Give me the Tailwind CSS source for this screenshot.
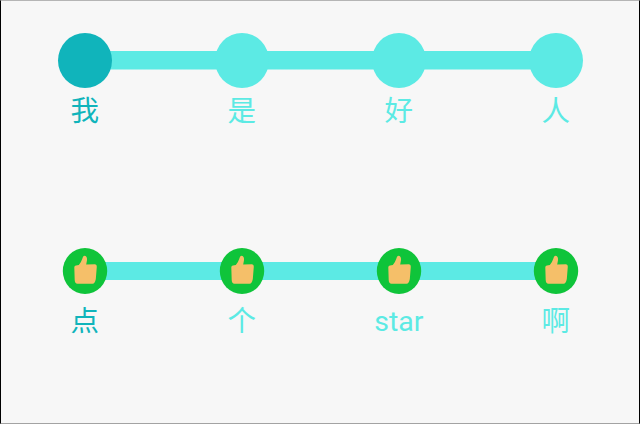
<!DOCTYPE html>
<html lang="zh-CN">
<head>
<meta charset="utf-8">
<title>Step view</title>
<script src="https://cdn.jsdelivr.net/npm/@tailwindcss/browser@4"></script>
</head>
<body class="bg-[#f7f7f7]">
<svg class="hidden">
  <symbol id="thumb" viewBox="0 0 46 46">
    <ellipse cx="23" cy="23" rx="22.2" ry="23" fill="#0fc43a"/>
    <path d="M12.3 19.2 Q12.4 17.8 14 17.6 L16.8 17 Q19.2 14.5 20.3 10.8 Q20.8 7.6 22.8 7.8 Q25.4 8.4 25 12.2 L24.2 16.4 L33 16.3 Q35 16.5 34.8 18.7 L33.8 31 Q33 35.6 30.5 35.8 L15.5 35.8 Q12.8 35.4 12.7 32 Z" fill="#f5bf69"/>
  </symbol>
</svg>
<main class="h-[424px] w-[640px] overflow-hidden border-x border-t border-b border-x-black border-t-[#b5b5b5] border-b-[#a3a3a3] pt-8 pl-[5.3px] font-['Roboto','Noto_Sans_CJK_SC',sans-serif] text-[28.5px] leading-[40px] text-[#5ceae4]">
  <section class="h-[215px] w-[628px]">
    <div class="grid h-[55px] grid-cols-4 items-center justify-items-center bg-[linear-gradient(#5ceae4,#5ceae4)] bg-[length:471px_18.5px] bg-center bg-no-repeat">
      <span class="h-[55px] w-[54px] rounded-[50%] bg-[#10b4bb]"></span>
      <span class="h-[55px] w-[54px] rounded-[50%] bg-[#5ceae4]"></span>
      <span class="h-[55px] w-[54px] rounded-[50%] bg-[#5ceae4]"></span>
      <span class="h-[55px] w-[54px] rounded-[50%] bg-[#5ceae4]"></span>
    </div>
    <div class="grid grid-cols-4 pt-[4px] text-center">
      <span class="text-[#10b4bb]">我</span><span>是</span><span>好</span><span>人</span>
    </div>
  </section>
  <section class="w-[628px]">
    <div class="grid h-[46px] grid-cols-4 items-center justify-items-center bg-[linear-gradient(#5ceae4,#5ceae4)] bg-[length:471px_18px] bg-center bg-no-repeat">
      <svg class="size-[46px]"><use href="#thumb"/></svg>
      <svg class="size-[46px]"><use href="#thumb"/></svg>
      <svg class="size-[46px]"><use href="#thumb"/></svg>
      <svg class="size-[46px]"><use href="#thumb"/></svg>
    </div>
    <div class="grid grid-cols-4 pt-[8px] text-center">
      <span class="text-[#10b4bb]">点</span><span>个</span><span>star</span><span>啊</span>
    </div>
  </section>
</main>
</body>
</html>
